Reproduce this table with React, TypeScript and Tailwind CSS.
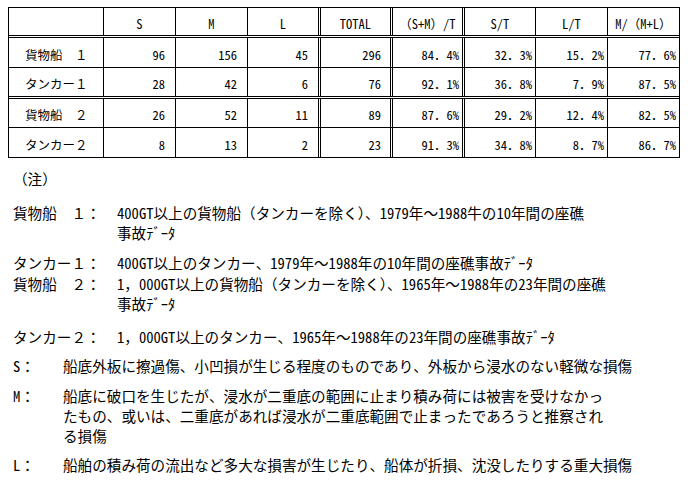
// 座礁事故の損傷区分別件数表と注記。Word から書き出した文書の見た目をそのまま再現する。

const FONT = '"Noto Sans Mono CJK JP", "Noto Sans CJK JP", sans-serif';

type Row = {
  name: string;
  s: number;
  m: number;
  l: number;
  total: number;
  pct: [string, string, string, string];
};

const rows: Row[] = [
  { name: "貨物船　１", s: 96, m: 156, l: 45, total: 296, pct: ["84．4%", "32．3%", "15．2%", "77．6%"] },
  { name: "タンカー１", s: 28, m: 42, l: 6, total: 76, pct: ["92．1%", "36．8%", "7．9%", "87．5%"] },
  { name: "貨物船　２", s: 26, m: 52, l: 11, total: 89, pct: ["87．6%", "29．2%", "12．4%", "82．5%"] },
  { name: "タンカー２", s: 8, m: 13, l: 2, total: 23, pct: ["91．3%", "34．8%", "8．7%", "86．7%"] },
];

// 列ごとの幅と右罫線(1px 実線 / 3px 二重線)
const cols = [
  "w-[95px] border-r",
  "w-[72px] border-r",
  "w-[72px] border-r",
  "w-[73px] border-r-[3px] border-double",
  "w-[72px] border-r-[3px] border-double",
  "w-[72px] border-r-[3px] border-double",
  "w-[71px] border-r",
  "w-[72px] border-r",
  "w-[71px]",
];

const rowClass = [
  "h-[30px] border-b",
  "h-[31px] border-b-[3px] border-double",
  "h-[29px] border-b",
  "h-[29px]",
];

function Cell({ col, align, children }: { col: number; align: string; children: React.ReactNode }) {
  return (
    <div className={`flex shrink-0 items-center border-black pt-[5px] ${cols[col]} ${align}`}>
      {children}
    </div>
  );
}

function Table() {
  const head = ["", "S", "M", "L", "TOTAL", "（S+M）/T", "S/T", "L/T", "M/（M+L）"];
  return (
    <div className="ml-[8px] mt-[7px] w-[672px] border border-black text-[12.5px] leading-none">
      <div className="flex h-[30px] border-b-[3px] border-double border-black">
        {head.map((h, i) => (
          <Cell key={i} col={i} align="justify-center">
            {h}
          </Cell>
        ))}
      </div>
      {rows.map((r, ri) => (
        <div key={r.name} className={`flex border-black ${rowClass[ri]}`}>
          <Cell col={0} align="justify-start pl-[16px]">
            {r.name}
          </Cell>
          <Cell col={1} align="justify-end pr-[10px]">{r.s}</Cell>
          <Cell col={2} align="justify-end pr-[10px]">{r.m}</Cell>
          <Cell col={3} align="justify-end pr-[10px]">{r.l}</Cell>
          <Cell col={4} align="justify-end pr-[9px]">{r.total}</Cell>
          {r.pct.map((p, pi) => (
            <Cell key={pi} col={5 + pi} align="justify-end pr-[3px]">
              {p}
            </Cell>
          ))}
        </div>
      ))}
    </div>
  );
}

function Note({
  label,
  lines,
  labelW,
  className,
}: {
  label: string;
  lines: string[];
  labelW: string;
  className: string;
}) {
  return (
    <div className={`flex ${className}`}>
      <div className={`shrink-0 ${labelW}`}>{label}</div>
      <div className="flex flex-col">
        {lines.map((t) => (
          <div key={t} className="whitespace-nowrap">
            {t}
          </div>
        ))}
      </div>
    </div>
  );
}

export default function App() {
  return (
    <div
      className="h-[486px] w-[691px] overflow-hidden bg-white text-black"
      style={{ fontFamily: FONT }}
    >
      <Table />
      <div className="mt-[11px] pl-[13px] text-[14.6px] leading-[20px]">
        <div>（注）</div>
        <Note
          className="mt-[14px]"
          labelW="w-[104px]"
          label="貨物船　１："
          lines={["400GT以上の貨物船（タンカーを除く）、1979年～1988牛の10年間の座礁", "事故ﾃﾞｰﾀ"]}
        />
        <Note
          className="mt-[10px]"
          labelW="w-[104px]"
          label="タンカー１："
          lines={["400GT以上のタンカー、1979年～1988年の10年間の座礁事故ﾃﾞｰﾀ"]}
        />
        <Note
          className="mt-[1px]"
          labelW="w-[104px]"
          label="貨物船　２："
          lines={["1，000GT以上の貨物船（タンカーを除く）、1965年～1988年の23年間の座礁", "事故ﾃﾞｰﾀ"]}
        />
        <Note
          className="mt-[13px]"
          labelW="w-[104px]"
          label="タンカー２："
          lines={["1，000GT以上のタンカー、1965年～1988年の23年間の座礁事故ﾃﾞｰﾀ"]}
        />
        <Note
          className="mt-[9px]"
          labelW="w-[50px]"
          label="S："
          lines={["船底外板に擦過傷、小凹損が生じる程度のものであり、外板から浸水のない軽微な損傷"]}
        />
        <Note
          className="mt-[10px]"
          labelW="w-[50px]"
          label="M："
          lines={[
            "船底に破口を生じたが、浸水が二重底の範囲に止まり積み荷には被害を受けなかっ",
            "たもの、或いは、二重底があれば浸水が二重底範囲で止まったであろうと推察され",
            "る損傷",
          ]}
        />
        <Note
          className="mt-[9px]"
          labelW="w-[50px]"
          label="L："
          lines={["船舶の積み荷の流出など多大な損害が生じたり、船体が折損、沈没したりする重大損傷"]}
        />
      </div>
    </div>
  );
}
